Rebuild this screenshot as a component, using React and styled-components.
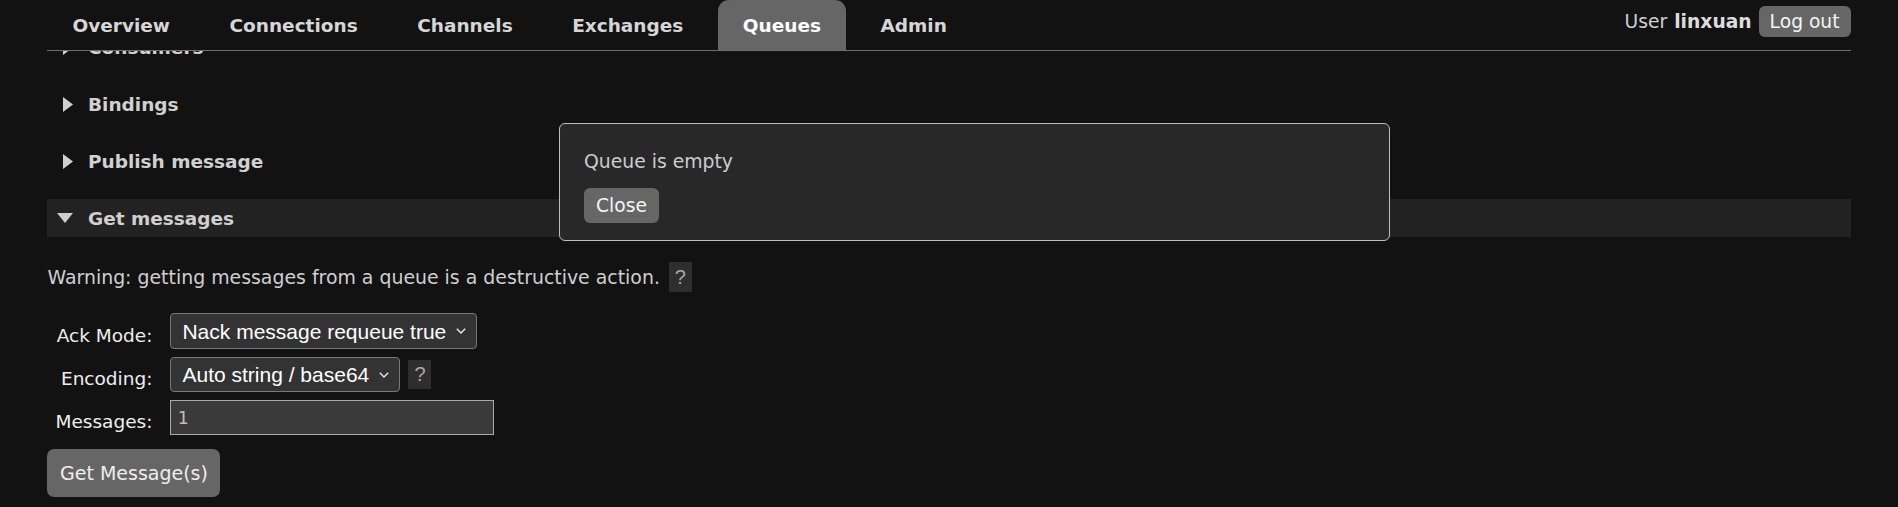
import React from "react";
import styled, { createGlobalStyle } from "styled-components";

const GlobalStyle = createGlobalStyle`
  html, body {
    margin: 0;
    padding: 0;
    background: #121212;
  }
  body {
    font-family: "DejaVu Sans", Verdana, sans-serif;
    font-size: 18px;
    color: #d2d2d2;
    overflow: hidden;
    height: 507px;
  }
`;

const Root = styled.div`
  position: relative;
  height: 507px;
`;

const Page = styled.div`
  width: 95%;
  margin: 0 auto;
  height: 507px;
  display: flex;
  flex-direction: column;
`;

const Header = styled.header`
  display: flex;
  justify-content: space-between;
  height: 50px;
  flex-shrink: 0;
  border-bottom: 1px solid #6e6e6e;
`;

const Nav = styled.nav`
  display: flex;
  gap: 9.5px;
`;

const Tab = styled.a`
  display: flex;
  align-items: center;
  padding: 0 25px;
  font-weight: bold;
  font-size: 18.5px;
  text-decoration: none;
  color: ${(p) => (p.$active ? "#ffffff" : "#d6d6d6")};
  background: ${(p) => (p.$active ? "#666666" : "transparent")};
  border-radius: 11px 11px 0 0;
`;

const UserBox = styled.div`
  display: flex;
  align-items: center;
  align-self: flex-start;
  margin-top: 6px;
  height: 31px;
  color: #cfcfcf;
  font-size: 18.7px;
`;

const UserName = styled.b`
  margin-left: 7px;
  color: #dcdcdc;
`;

const SmallButton = styled.button`
  height: ${(p) => p.$h || 31}px;
  padding: 0 ${(p) => p.$px || 11}px;
  margin-left: ${(p) => p.$ml || 0}px;
  background: #666666;
  color: #f4f4f4;
  border: none;
  border-radius: 6px;
  font-family: "DejaVu Sans", Verdana, sans-serif;
  font-size: 18.7px;
  cursor: pointer;
`;

const Viewport = styled.main`
  flex: 1;
  overflow: hidden;
`;

const Content = styled.div`
  margin-top: -23px;
`;

const SectionHeading = styled.h2`
  margin: 0 0 ${(p) => (p.$open ? 0 : 19)}px;
  height: 38px;
  display: flex;
  align-items: center;
  font-size: 18.5px;
  font-weight: bold;
  color: #d0d0d0;
  background: ${(p) => (p.$open ? "#222222" : "transparent")};
`;

const Arrow = styled.span`
  width: 26px;
  margin-right: 14.5px;
  display: flex;
  justify-content: flex-end;
  align-items: center;
`;

const Warning = styled.p`
  margin: 25px 0 0;
  height: 30px;
  display: flex;
  align-items: center;
  color: #cfcfcf;
  font-size: 18.9px;
  white-space: pre;
`;

const Help = styled.span`
  display: inline-flex;
  align-items: center;
  justify-content: center;
  width: 23px;
  height: ${(p) => p.$h || 30}px;
  margin-left: ${(p) => p.$ml || 0}px;
  background: #2e2e2e;
  color: #a8a8a8;
  font-family: "Liberation Sans", Arial, sans-serif;
  font-size: 20px;
`;

const FormGrid = styled.div`
  display: grid;
  grid-template-columns: 105px auto;
  column-gap: 18px;
  row-gap: 8px;
  margin-top: 21px;
  justify-content: start;
  align-items: center;
`;

const Label = styled.label`
  text-align: right;
  padding-top: 8px;
  color: #eeeeee;
  font-size: 18.5px;
  white-space: nowrap;
`;

const Field = styled.div`
  display: flex;
  align-items: center;
  gap: 8px;
`;

const SelectWrap = styled.div`
  position: relative;
  display: inline-flex;
`;

const Select = styled.select`
  appearance: none;
  -webkit-appearance: none;
  box-sizing: border-box;
  width: ${(p) => p.$w}px;
  height: ${(p) => p.$h}px;
  margin: 0;
  padding: 0 30px 0 11px;
  background: #333333;
  color: #ffffff;
  border: 1px solid #787878;
  border-radius: 4px;
  font-family: "Liberation Sans", Arial, sans-serif;
  font-size: 21px;
`;

const Chevron = styled.svg`
  position: absolute;
  right: 11px;
  top: 50%;
  margin-top: -3px;
  pointer-events: none;
`;

const TextInput = styled.input`
  box-sizing: border-box;
  width: 324px;
  height: 35px;
  margin: 0;
  padding: 0 6px;
  background: #3a3a3a;
  color: #bdbdbd;
  border: 1px solid #a9a9a9;
  font-family: "DejaVu Sans Mono", "Liberation Mono", monospace;
  font-size: 18px;
  outline: none;
`;

const BigButton = styled.button`
  margin-top: 14px;
  height: 48px;
  width: 173px;
  background: #666666;
  color: #eeeeee;
  border: none;
  border-radius: 7px;
  font-family: "DejaVu Sans", Verdana, sans-serif;
  font-size: 19px;
  cursor: pointer;
`;

const Popup = styled.div`
  position: absolute;
  left: 559px;
  top: 123px;
  width: 831px;
  height: 118px;
  box-sizing: border-box;
  padding: 27px 24px 0;
  background: #282828;
  border: 1px solid #bdbdbd;
  border-radius: 6px;
  color: #cccccc;
`;

const PopupText = styled.p`
  margin: 0 0 16px;
  font-size: 18.8px;
`;

const TriangleRight = () => (
  <svg width="10" height="15" viewBox="0 0 10 15">
    <polygon points="0,0 10,7.5 0,15" fill="#cfcfcf" />
  </svg>
);

const TriangleDown = () => (
  <svg width="16" height="10" viewBox="0 0 16 10">
    <polygon points="0,0 16,0 8,10" fill="#cfcfcf" />
  </svg>
);

const ChevronIcon = () => (
  <Chevron width="10" height="6" viewBox="0 0 10 6">
    <polyline points="0.8,0.8 5,5 9.2,0.8" fill="none" stroke="#e8e8e8" strokeWidth="1.4" />
  </Chevron>
);

const tabs = ["Overview", "Connections", "Channels", "Exchanges", "Queues", "Admin"];

export default function App() {
  return (
    <Root>
      <GlobalStyle />
      <Page>
        <Header>
          <Nav>
            {tabs.map((t) => (
              <Tab key={t} href="#" $active={t === "Queues"}>
                {t}
              </Tab>
            ))}
          </Nav>
          <UserBox>
            User<UserName>linxuan</UserName>
            <SmallButton $ml={7}>Log out</SmallButton>
          </UserBox>
        </Header>
        <Viewport>
          <Content>
            <SectionHeading>
              <Arrow><TriangleRight /></Arrow>Consumers
            </SectionHeading>
            <SectionHeading>
              <Arrow><TriangleRight /></Arrow>Bindings
            </SectionHeading>
            <SectionHeading>
              <Arrow><TriangleRight /></Arrow>Publish message
            </SectionHeading>
            <SectionHeading $open>
              <Arrow><TriangleDown /></Arrow>Get messages
            </SectionHeading>
            <Warning>
              Warning: getting messages from a queue is a destructive action.
              <Help $ml={9}>?</Help>
            </Warning>
            <FormGrid>
              <Label>Ack Mode:</Label>
              <Field>
                <SelectWrap>
                  <Select $w={307} $h={36} defaultValue="nack">
                    <option value="nack">Nack message requeue true</option>
                    <option value="ack">Automatic ack</option>
                    <option value="reject">Reject requeue true</option>
                  </Select>
                  <ChevronIcon />
                </SelectWrap>
              </Field>
              <Label>Encoding:</Label>
              <Field>
                <SelectWrap>
                  <Select $w={230} $h={35} defaultValue="auto">
                    <option value="auto">Auto string / base64</option>
                    <option value="base64">base64</option>
                  </Select>
                  <ChevronIcon />
                </SelectWrap>
                <Help $h={29}>?</Help>
              </Field>
              <Label>Messages:</Label>
              <Field>
                <TextInput defaultValue="1" />
              </Field>
            </FormGrid>
            <BigButton>Get Message(s)</BigButton>
          </Content>
        </Viewport>
      </Page>
      <Popup>
        <PopupText>Queue is empty</PopupText>
        <SmallButton $h={35} $px={12}>Close</SmallButton>
      </Popup>
    </Root>
  );
}
